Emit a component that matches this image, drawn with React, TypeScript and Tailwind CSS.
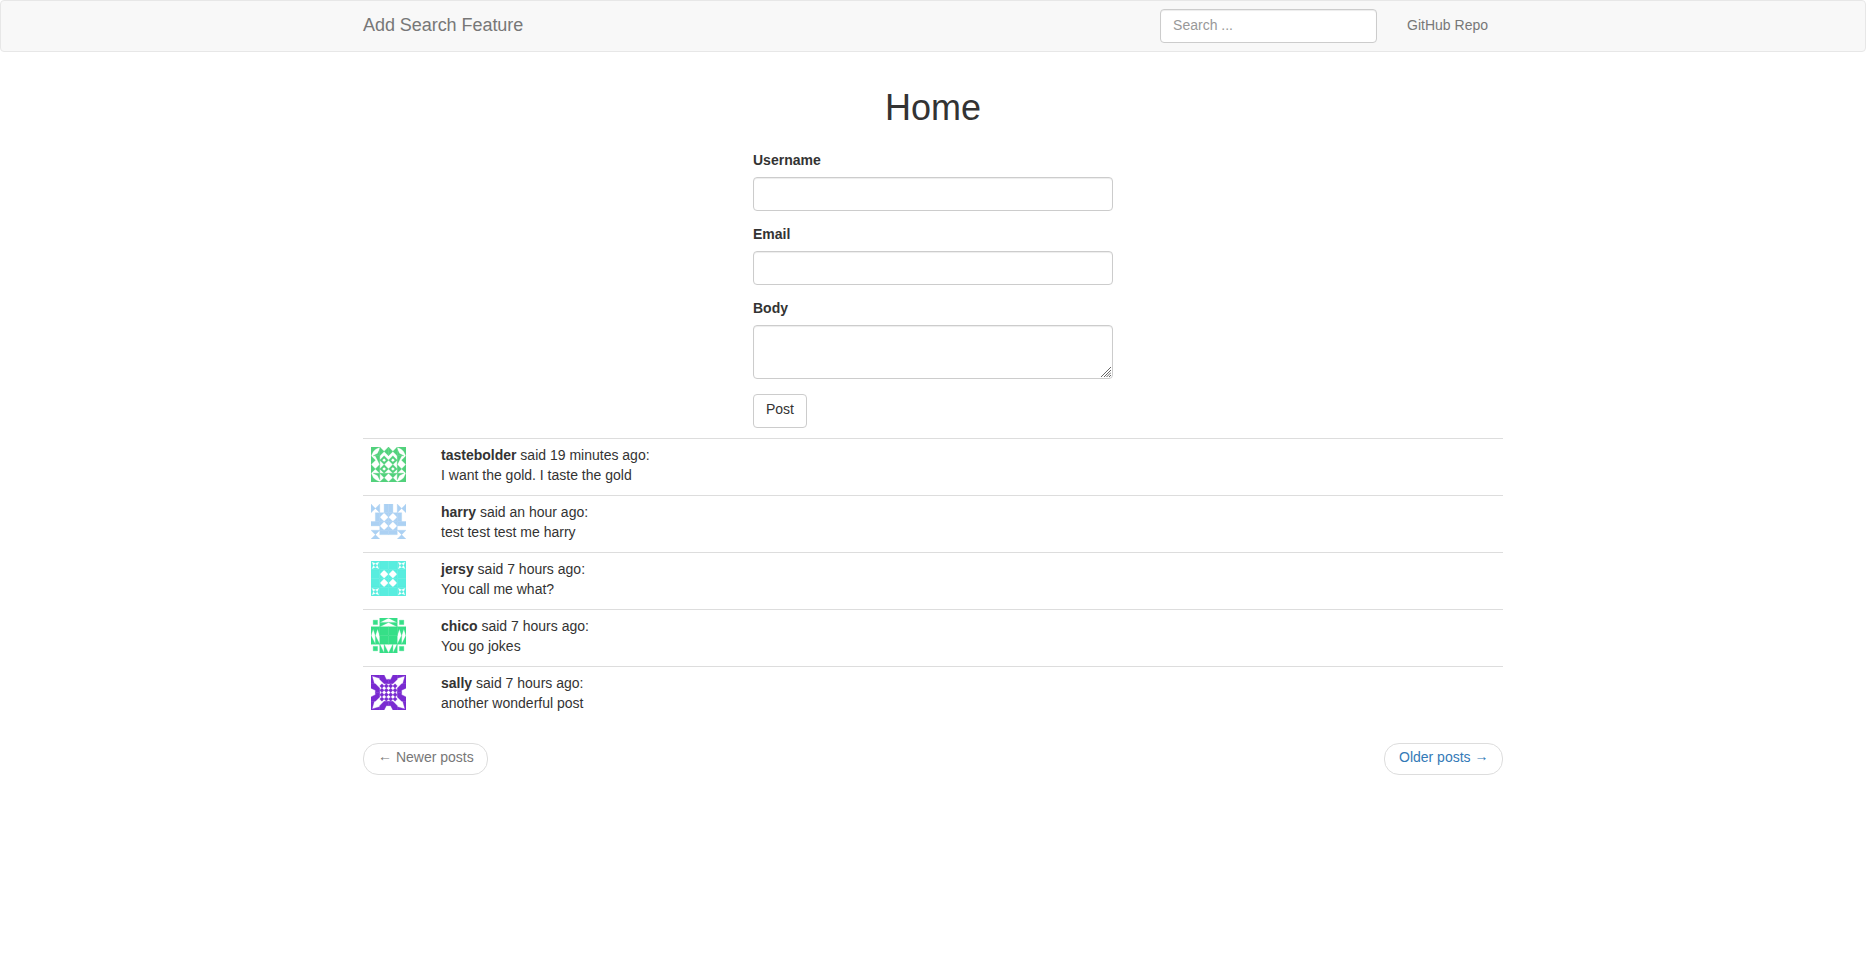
import React from "react";

type Cell = { x: number; y: number; d: string };
type Post = { name: string; when: string; body: string; color: string; cells: Cell[] };

const FULL = "M0 0H4V4H0Z";
const DIAMOND_HOLE = "M0 0H4V4H0ZM2 0L0 2L2 4L4 2Z";
const RING = "M2 0L0 2L2 4L4 2ZM2 1.1L2.9 2L2 2.9L1.1 2Z";
const RIGHT = "M2 0H4V4H2Z";
const TOP = "M0 0H4V2H0Z";
const BOWTIE = "M0 0L2 2L0 4ZM4 0L2 2L4 4Z";
const HOURGLASS = "M0 0H4L2 2ZM0 4H4L2 2Z";
const SQUARE = "M1 1H3V3H1Z";
const STAR = "M0 0H4V4H0ZM0.2 0.2L1 2L0.2 3.8L2 3L3.8 3.8L3 2L3.8 0.2L2 1ZM2 1.2L2.8 2L2 2.8L1.2 2Z";
const WINDOWS = "M1 0L0 1L1 2L2 1ZM3 0L2 1L3 2L4 1ZM1 2L0 3L1 4L2 3ZM3 2L2 3L3 4L4 3Z";
const FAN = "M0 0H4L0 2ZM0 2H4L0 4Z";
const SPIKES = "M0 0L2 4H0ZM2 0L4 4H2Z";
const SPIKES_DOWN = "M0 0H4V4L3 1L2 4L1 1L0 4Z";

const posts: Post[] = [
  {
    name: "tastebolder", when: "19 minutes ago", body: "I want the gold. I taste the gold", color: "#52d17c",
    cells: [
      { x: 0, y: 0, d: "M0 0H4L2 1L1 2L0 4ZM4 1V4H1L3 3Z" }, { x: 1, y: 0, d: BOWTIE },
      { x: 0, y: 1, d: "M0 0L2 2L0 4ZM2 0H4V4L3 2Z" }, { x: 1, y: 1, d: RING },
      { x: 0, y: 2, d: "M0 0L2 2L0 4ZM4 0L2 2L4 4Z" }, { x: 1, y: 2, d: RING },
      { x: 0, y: 3, d: "M0 0L1 2L2 3L4 4H0ZM1 0H4V3L3 1Z" }, { x: 1, y: 3, d: HOURGLASS },
    ],
  },
  {
    name: "harry", when: "an hour ago", body: "test test test me harry", color: "#acd1f3",
    cells: [
      { x: 0, y: 0, d: BOWTIE }, { x: 1, y: 0, d: RIGHT },
      { x: 0, y: 1, d: RIGHT }, { x: 1, y: 1, d: DIAMOND_HOLE },
      { x: 0, y: 2, d: TOP }, { x: 1, y: 2, d: DIAMOND_HOLE },
      { x: 0, y: 3, d: HOURGLASS }, { x: 1, y: 3, d: TOP },
    ],
  },
  {
    name: "jersy", when: "7 hours ago", body: "You call me what?", color: "#58eddf",
    cells: [
      { x: 0, y: 0, d: STAR }, { x: 1, y: 0, d: FULL },
      { x: 0, y: 1, d: FULL }, { x: 1, y: 1, d: DIAMOND_HOLE },
      { x: 0, y: 2, d: FULL }, { x: 1, y: 2, d: DIAMOND_HOLE },
      { x: 0, y: 3, d: STAR }, { x: 1, y: 3, d: FULL },
    ],
  },
  {
    name: "chico", when: "7 hours ago", body: "You go jokes", color: "#36df87",
    cells: [
      { x: 0, y: 0, d: SQUARE }, { x: 1, y: 0, d: FAN },
      { x: 0, y: 1, d: SPIKES_DOWN }, { x: 1, y: 1, d: FULL },
      { x: 0, y: 2, d: SPIKES }, { x: 1, y: 2, d: FULL },
      { x: 0, y: 3, d: SQUARE }, { x: 1, y: 3, d: SPIKES },
    ],
  },
  {
    name: "sally", when: "7 hours ago", body: "another wonderful post", color: "#7a2bd1",
    cells: [
      { x: 0, y: 0, d: "M0 0H4V1.5L0.5 0.5L1.5 4H0Z" }, { x: 1, y: 0, d: "M0 0H2L3 2H4V4H2L0 2Z" },
      { x: 0, y: 1, d: "M0 0V2L2 3V4H4V2L2 0Z" }, { x: 1, y: 1, d: WINDOWS },
      { x: 0, y: 2, d: "M2 0V1L0 2V4H2L4 2V0Z" }, { x: 1, y: 2, d: WINDOWS },
      { x: 0, y: 3, d: "M0 4H4V2.5L0.5 3.5L1.5 0H0Z" }, { x: 1, y: 3, d: "M0 4H2L3 2H4V0H2L0 2Z" },
    ],
  },
];

function HalfIcon({ cells }: { cells: Cell[] }) {
  return (
    <>
      {cells.map((c) => (
        <path key={`${c.x}-${c.y}`} d={c.d} fillRule="evenodd" transform={`translate(${c.x * 4} ${c.y * 4})`} />
      ))}
    </>
  );
}

function Avatar({ color, cells }: { color: string; cells: Cell[] }) {
  return (
    <svg width="35" height="35" viewBox="0 0 16 16" fill={color} stroke={color} strokeWidth="0.16" className="block">
      <HalfIcon cells={cells} />
      <g transform="translate(16 0) scale(-1 1)">
        <HalfIcon cells={cells} />
      </g>
    </svg>
  );
}

const control =
  "block w-full rounded-[4px] border border-[#ccc] bg-white px-3 pt-[5px] pb-[7px] text-[14px] leading-5 text-[#555] shadow-[inset_0_1px_1px_rgba(0,0,0,0.075)] outline-none placeholder:text-[#999]";

function Field({ label, children }: { label: string; children: React.ReactNode }) {
  return (
    <div className="mb-[13px]">
      <label className="mb-[7px] block font-bold">{label}</label>
      {children}
    </div>
  );
}

export default function App() {
  return (
    <div className="min-h-[968px] bg-white font-['Helvetica_Neue',Helvetica,'Liberation_Sans',Arial,sans-serif] text-[14px] leading-5 text-[#333]">
      <nav className="mb-5 h-[52px] rounded-[4px] border border-[#e7e7e7] bg-[#f8f8f8]">
        <div className="mx-auto flex h-[50px] w-[1140px] items-center justify-between">
          <a className="pb-0.5 text-[18px] leading-5 tracking-[-0.05px] text-[#777]">Add Search Feature</a>
          <div className="flex items-center">
            <div className="w-[217px]">
              <input className={`${control} h-[34px]`} placeholder="Search ..." />
            </div>
            <a className="ml-[15px] px-[15px] pb-0.5 text-[#777]">GitHub Repo</a>
          </div>
        </div>
      </nav>
      <main className="mx-auto w-[1140px]">
        <h1 className="mt-5 mb-[7px] pt-4 text-center text-[36px] leading-10">Home</h1>
        <form className="mx-auto w-[360px] pt-[15px]">
          <Field label="Username"><input className={`${control} h-[34px]`} /></Field>
          <Field label="Email"><input className={`${control} h-[34px]`} /></Field>
          <Field label="Body">
            <div className="relative">
              <textarea rows={2} className={`${control} h-[54px] resize-none`} />
              <svg width="10" height="10" viewBox="0 0 10 10" stroke="#666" strokeWidth="1" className="pointer-events-none absolute right-[2px] bottom-[2px]">
                <path d="M0 10L10 0M3 10L10 3M5.5 10L10 5.5M8 10L10 8" />
              </svg>
            </div>
          </Field>
          <button type="button" className="mt-[15px] block h-[34px] rounded-[4px] border border-[#ccc] bg-white px-3 pt-1 pb-2 leading-5">Post</button>
        </form>
        <ul className="mt-2.5">
          {posts.map((p) => (
            <li key={p.name} className="flex h-[57px] border-t border-[#ddd] px-2 pt-1.5">
              <div className="w-[70px] pt-0.5"><Avatar color={p.color} cells={p.cells} /></div>
              <div>
                <p><b>{p.name}</b> said {p.when}:</p>
                <p>{p.body}</p>
              </div>
            </li>
          ))}
        </ul>
        <div className="mt-5 flex justify-between">
          <a className="h-8 w-[125px] rounded-[15px] border border-[#ddd] pt-[3px] pl-[14px] whitespace-nowrap text-[#777]"><span className="inline-block -translate-y-px">←</span> Newer posts</a>
          <a className="h-8 w-[119px] rounded-[15px] border border-[#ddd] pt-[3px] pl-[14px] whitespace-nowrap text-[#337ab7]">Older posts <span className="inline-block -translate-y-px">→</span></a>
        </div>
      </main>
    </div>
  );
}
